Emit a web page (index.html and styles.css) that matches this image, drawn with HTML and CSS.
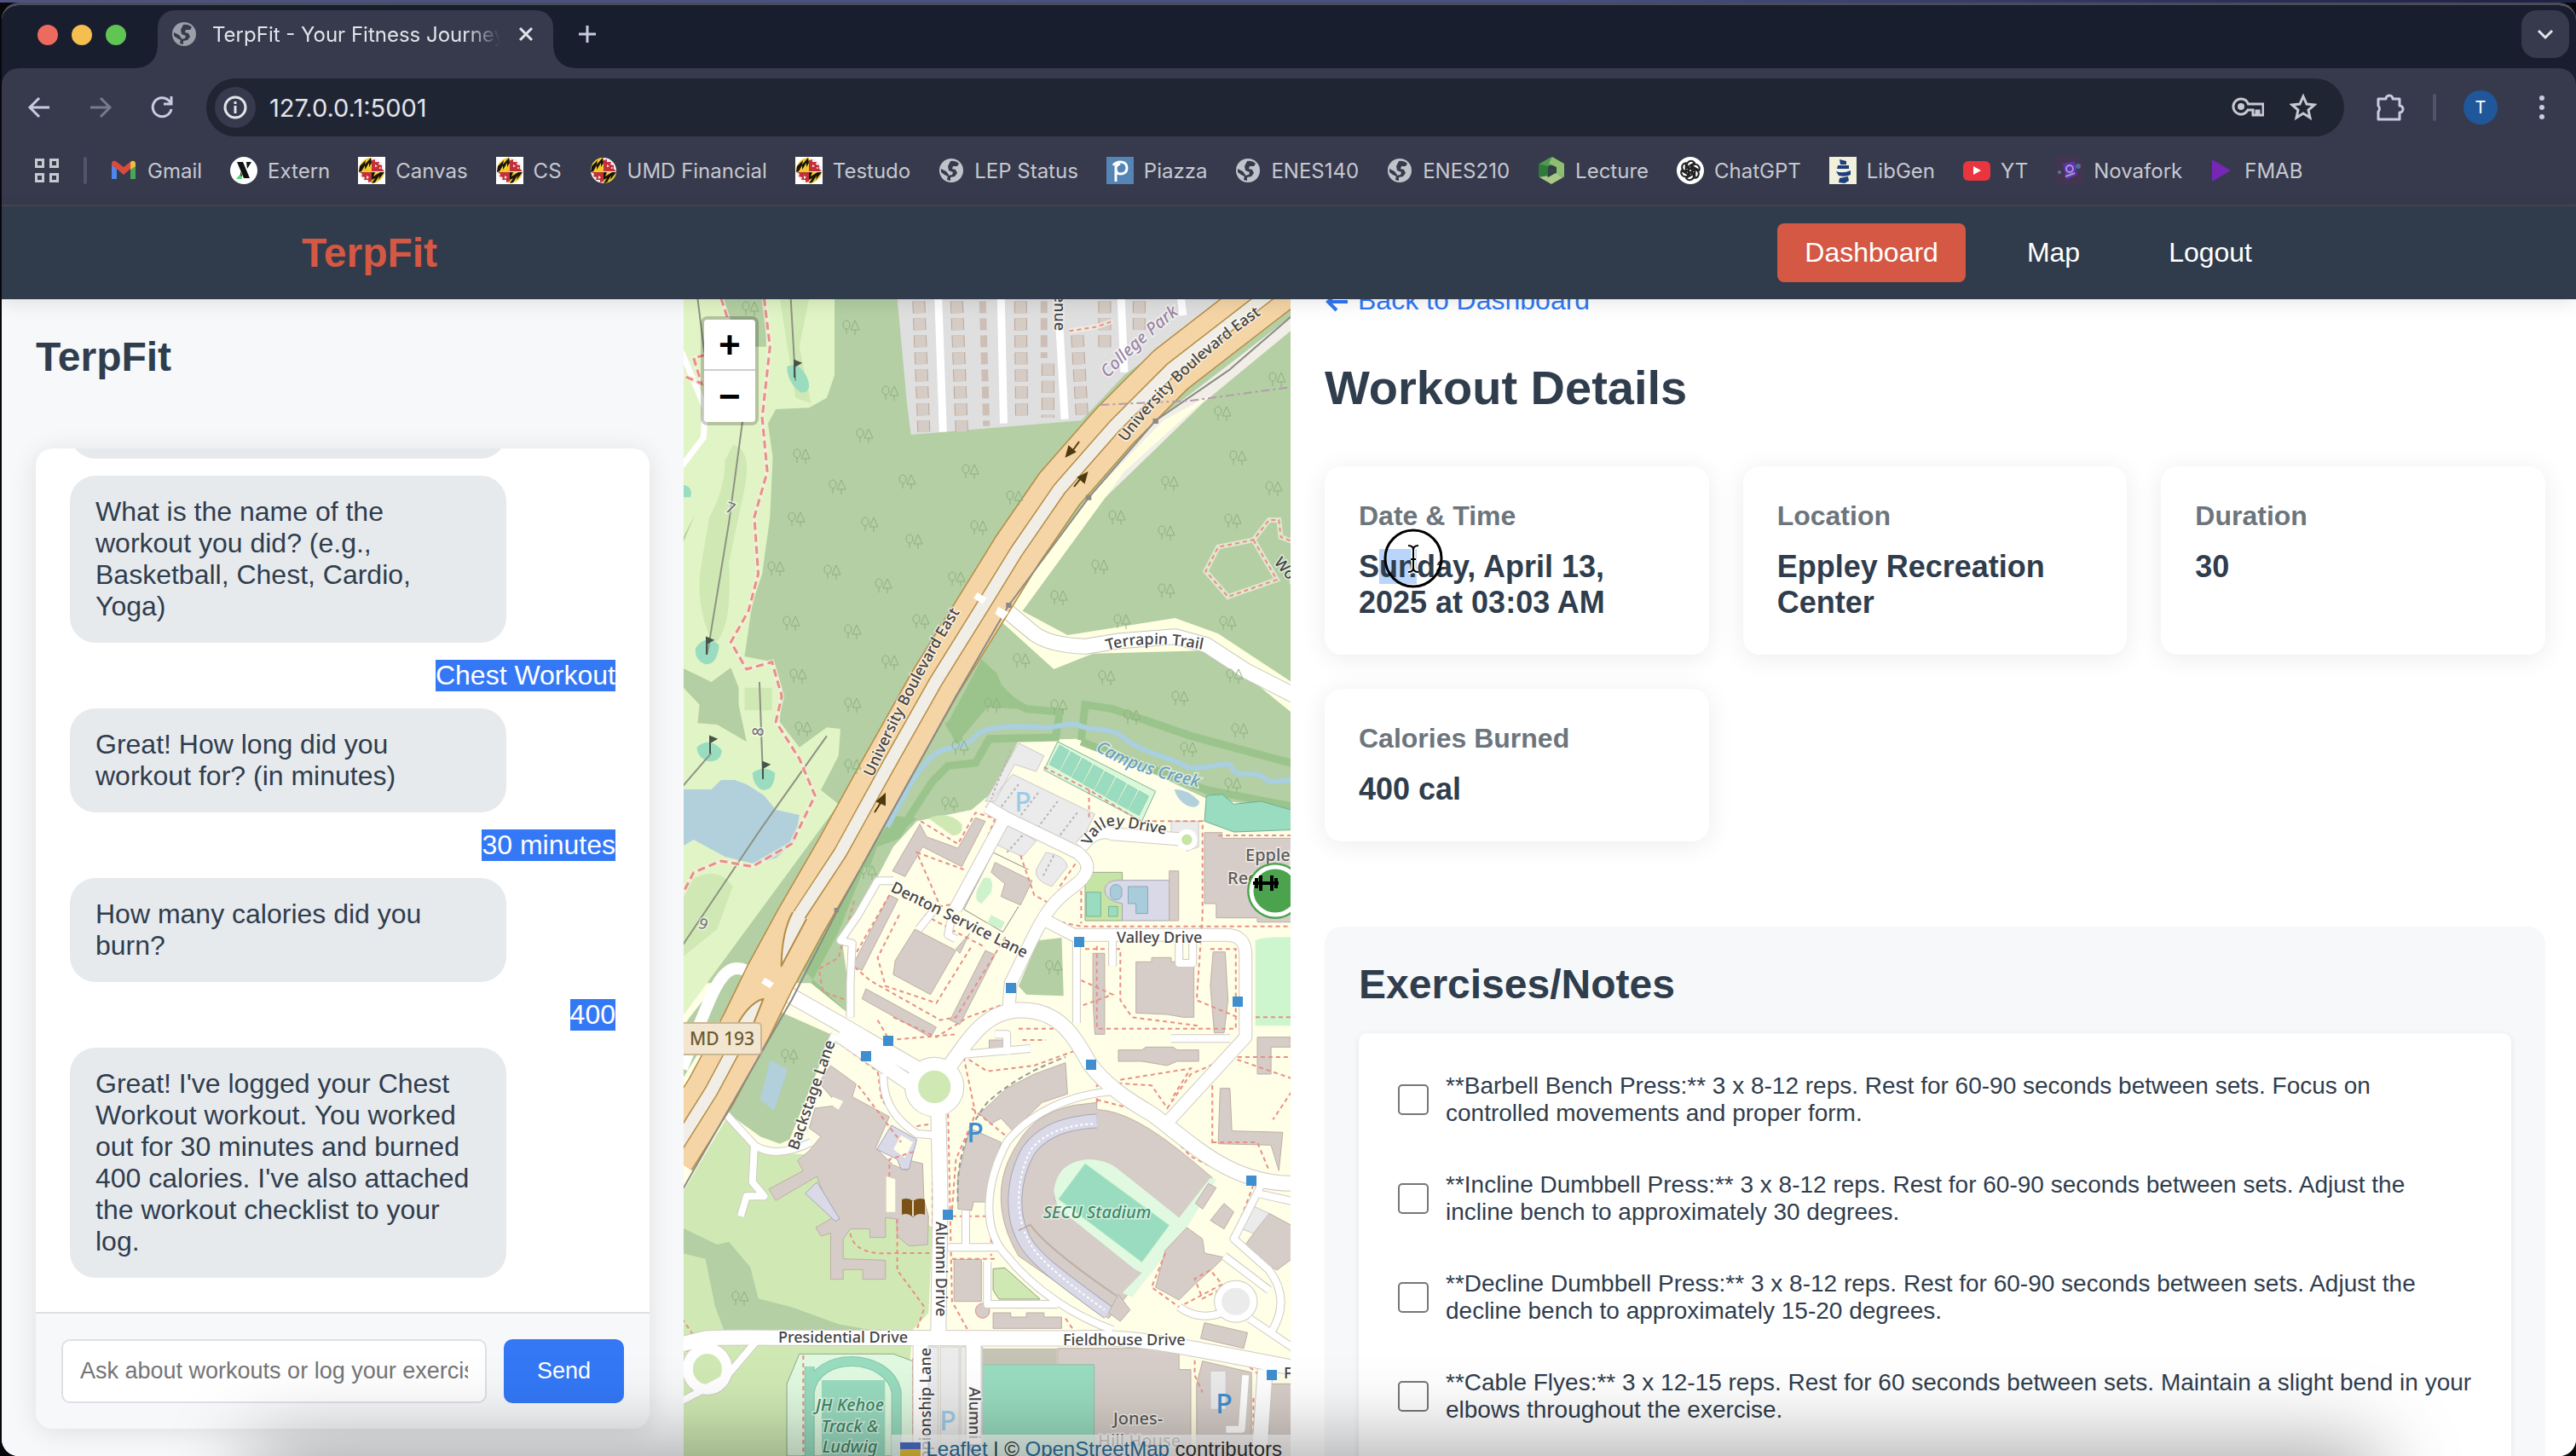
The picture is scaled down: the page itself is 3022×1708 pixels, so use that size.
FILE: index.html
```html
<!DOCTYPE html>
<html lang="en">
<head>
<meta charset="utf-8">
<title>TerpFit - Your Fitness Journey</title>
<link rel="stylesheet" href="styles.css">
</head>
<body>
<svg class="defs" aria-hidden="true">
  <defs>
    <symbol id="globe" viewBox="0 0 30 30">
      <circle cx="15" cy="15" r="14" fill="currentColor"/>
      <path class="cut" d="M14 4Q20 3 24 7L22 10 17 10 16 13 20 14 22 18 19 22 14 23 14 27 10 26 11 21 16 20 17 17 12 15 11 10Z M3 13L9 16 12 20 11 22 7 20 3 17Z"/>
    </symbol>
    <symbol id="terp" viewBox="0 0 32 32">
      <circle cx="16" cy="16" r="15" fill="#f4eeee"/>
      <path d="M16 1A15 15 0 0 0 1 18H16ZM16 31A15 15 0 0 0 31 18H16Z" fill="#efc92f"/>
      <path d="M2 11L9 4 8 9 15 1 16 7 13 12 13 7 8 15 8 10 4 17 1 18ZM16 18H20L18 23 26 18H31L24 27 25 22 20 30 16 31 20 25 16 27Z" fill="#17130a"/>
      <path d="M16 4L20 3 20 6 25 6 24 9 28 10 28 14 31 17H16ZM16 18V29L12 30 12 27 7 27 8 24 4 23 5 20 2 18Z" fill="#c2303a"/>
      <path d="M20 9l3 2-3 1zM10 22l3 2-3 2zM25 12l3 1-3 1z" fill="#f4eeee"/>
    </symbol>
  </defs>
</svg>
<div class="window">
  <header class="browser">
    <div class="tabstrip">
      <div class="lights"><span class="red"></span><span class="yellow"></span><span class="green"></span></div>
      <div class="tab">
        <svg class="globe" width="30" height="30"><use href="#globe"/></svg>
        <span class="tab-title">TerpFit - Your Fitness Journey</span>
        <button class="icon-btn" aria-label="Close tab"><svg width="24" height="24" viewBox="0 0 24 24"><path d="M5 5l14 14M19 5L5 19" stroke="#e3e4ea" stroke-width="3"/></svg></button>
      </div>
      <button class="icon-btn new-tab" aria-label="New tab"><svg width="24" height="24" viewBox="0 0 24 24"><path d="M12 2v20M2 12h20" stroke="#c9cbe0" stroke-width="3"/></svg></button>
      <button class="tab-search" aria-label="Search tabs"><svg width="24" height="24" viewBox="0 0 24 24"><path d="M4 8l8 8 8-8" fill="none" stroke="#e3e4ea" stroke-width="3"/></svg></button>
    </div>
    <div class="toolbar">
      <button class="icon-btn" aria-label="Back"><svg width="28" height="28" viewBox="0 0 28 28"><path d="M26 14H3M14 3L3 14l11 11" fill="none" stroke="#c9cbe0" stroke-width="3"/></svg></button>
      <button class="icon-btn" aria-label="Forward"><svg width="28" height="28" viewBox="0 0 28 28"><path d="M2 14h23M14 3l11 11-11 11" fill="none" stroke="#777a88" stroke-width="3"/></svg></button>
      <button class="icon-btn" aria-label="Reload"><svg width="28" height="28" viewBox="0 0 28 28"><path d="M25 16A11 11 0 1 1 22 6l3 3M25 1v9h-9" fill="none" stroke="#c9cbe0" stroke-width="3"/></svg></button>
      <div class="omnibox">
        <span class="site-info"><svg width="28" height="28" viewBox="0 0 28 28"><circle cx="14" cy="14" r="12" fill="none" stroke="#e3e4ea" stroke-width="3"/><path d="M14 12v9M14 7v3" stroke="#e3e4ea" stroke-width="3"/></svg></span>
        <input class="url" type="text" value="127.0.0.1:5001" aria-label="Address">
        <button class="icon-btn" aria-label="Passwords"><svg width="38" height="24" viewBox="0 0 38 24"><path d="M11 2a9 9 0 1 0 8 13h6v6h4v-5h3v5h5V8H19.500A9 9 0 0 0 11 2z" fill="none" stroke="#c7c8d0" stroke-width="3"/><circle cx="11" cy="11" r="4" fill="#c7c8d0"/></svg></button>
        <button class="icon-btn" aria-label="Bookmark"><svg width="32" height="32" viewBox="0 0 32 32"><path d="M16 3l4 9 9 1-7 6 2 9-8-5-8 5 2-9-7-6 9-1z" fill="none" stroke="#c7c8d0" stroke-width="3"/></svg></button>
      </div>
      <button class="icon-btn ext" aria-label="Extensions"><svg width="36" height="36" viewBox="0 0 36 36"><path d="M4 8h9a4 4 0 0 1 8 0h8v8a4 4 0 0 1 0 8v8H4v-9a5 5 0 0 0 0-7z" fill="none" stroke="#c9cbe0" stroke-width="3" stroke-linejoin="round"/></svg></button>
      <span class="rule"></span>
      <button class="avatar" aria-label="Profile">T</button>
      <button class="icon-btn" aria-label="Menu"><svg width="8" height="30" viewBox="0 0 8 30"><g fill="#c9cbe0"><circle cx="4" cy="4" r="3"/><circle cx="4" cy="15" r="3"/><circle cx="4" cy="26" r="3"/></g></svg></button>
    </div>
    <nav class="bookmarks" aria-label="Bookmarks">
      <button class="icon-btn" aria-label="Apps"><svg width="30" height="30" viewBox="0 0 30 30"><path d="M2.500 2.500h8v8h-8zM19.500 2.500h8v8h-8zM2.500 19.500h8v8h-8zM19.500 19.500h8v8h-8z" fill="none" stroke="#c7c8d0" stroke-width="3"/></svg></button>
      <span class="rule"></span>
      <a href="#"><svg width="32" height="32" viewBox="0 0 32 32"><path d="M2 8v18h6V14z" fill="#4e86ec"/><path d="M24 14v12h6V8z" fill="#4aa757"/><path d="M2 8c0-4 4-4 6-2l8 6 8-6 0 8-8 7-8-7-6-4z" fill="#d94b3d"/><path d="M24 6c2-2 6-2 6 2v3l-6 4z" fill="#f0bc3e"/></svg>Gmail</a>
      <a href="#"><svg width="32" height="32" viewBox="0 0 32 32"><circle cx="16" cy="16" r="16" fill="#fff"/><path d="M8 6h7l8 19h-7zM19 6h6l-5 8zM12 17l2 5-2 4z" fill="#111"/><path d="M7 26l5-6 2 6z" fill="#4ddc6d"/></svg>Extern</a>
      <a href="#"><svg class="tile" width="32" height="32"><use href="#terp"/></svg>Canvas</a>
      <a href="#"><svg class="tile" width="32" height="32"><use href="#terp"/></svg>CS</a>
      <a href="#"><svg width="32" height="32"><use href="#terp"/></svg>UMD Financial</a>
      <a href="#"><svg class="tile" width="32" height="32"><use href="#terp"/></svg>Testudo</a>
      <a href="#"><svg class="globe light" width="30" height="30"><use href="#globe"/></svg>LEP Status</a>
      <a href="#"><svg width="32" height="32" viewBox="0 0 32 32"><path fill="#5585b5" d="M0 0h32v32H0z"/><path d="M11 29V12M8 10q3-4 8-4 8 0 8 7t-8 7q-5 0-5-7 0-3 5-5" fill="none" stroke="#fff" stroke-width="3"/></svg>Piazza</a>
      <a href="#"><svg class="globe light" width="30" height="30"><use href="#globe"/></svg>ENES140</a>
      <a href="#"><svg class="globe light" width="30" height="30"><use href="#globe"/></svg>ENES210</a>
      <a href="#"><svg width="32" height="32" viewBox="0 0 32 32"><path d="M16 0L2 8v16l10-4V11l8-3z" fill="#4f9a4f"/><path d="M17 0l14 8v16l-9-4 0-8-9-4z" fill="#8cc06e"/><path d="M2 24l14 8 14-8-9-5-9 5-4-8z" fill="#a9c987"/><path d="M13 12l9 5-9 4z" fill="#2c4a3f"/><path d="M1 8l11 3v11L1 24z" fill="#2f7a3a"/></svg>Lecture</a>
      <a href="#"><svg width="32" height="32" viewBox="0 0 32 32"><circle cx="16" cy="16" r="16" fill="#fff"/><g fill="none" stroke="#222" stroke-width="2"><path id="petal" d="M12 14V9a5 5 0 0 1 9-2l-7 4v8"/><use href="#petal" transform="rotate(60 16 16)"/><use href="#petal" transform="rotate(120 16 16)"/><use href="#petal" transform="rotate(180 16 16)"/><use href="#petal" transform="rotate(240 16 16)"/><use href="#petal" transform="rotate(300 16 16)"/></g></svg>ChatGPT</a>
      <a href="#"><svg width="32" height="32" viewBox="0 0 32 32"><path fill="#f1f0dc" d="M0 0h32v32H0z"/><path d="M12 3l8 2v4h-7zM10 10h13v4H9zM8 17q8 3 17-1v5q-6 3-14 1zM12 25l10-2 1 5-5 3-7-1z" fill="#1d3d7c"/></svg>LibGen</a>
      <a href="#"><svg width="32" height="32" viewBox="0 0 32 32"><rect y="5" width="32" height="23" rx="6" fill="#e8353e"/><path d="M12 11l9 5-9 5z" fill="#fff"/></svg>YT</a>
      <a href="#"><svg width="32" height="32" viewBox="0 0 32 32"><path fill="#43344f" d="M0 0h32v32H0z"/><path d="M8 8l14-3 3 16-13 6z" fill="#5a35a8"/><circle cx="16" cy="14" r="4" fill="none" stroke="#a994d8" stroke-width="2"/><circle cx="4" cy="18" r="2" fill="#4a7f9c"/><circle cx="26" cy="11" r="3" fill="#4a6f9c"/><path d="M11 23l11-4" stroke="#a99cc8" stroke-width="2"/></svg>Novafork</a>
      <a href="#"><svg width="28" height="32" viewBox="0 0 28 32"><path d="M2 3l22 13L2 29z" fill="#7627b5"/></svg>FMAB</a>
    </nav>
  </header>

  <div class="site-nav">
    <div class="site-nav-inner">
      <a class="brand" href="#">TerpFit</a>
      <nav class="links" aria-label="Main"><a class="active" href="#">Dashboard</a><a href="#">Map</a><a href="#">Logout</a></nav>
    </div>
  </div>

  <main class="page">
    <section class="chat-col">
      <h2>TerpFit</h2>
      <div class="chat">
        <div class="messages">
          <p class="bot">Hi! Let's log your workout.</p>
          <p class="bot">What is the name of the workout you did? (e.g., Basketball, Chest, Cardio, Yoga)</p>
          <p class="user"><mark>Chest Workout</mark></p>
          <p class="bot">Great! How long did you workout for? (in minutes)</p>
          <p class="user"><mark>30 minutes</mark></p>
          <p class="bot">How many calories did you burn?</p>
          <p class="user"><mark>400</mark></p>
          <p class="bot">Great! I've logged your Chest Workout workout. You worked out for 30 minutes and burned 400 calories. I've also attached the workout checklist to your log.</p>
        </div>
        <form class="composer">
          <input type="text" placeholder="Ask about workouts or log your exercises..." aria-label="Message">
          <button type="button">Send</button>
        </form>
      </div>
    </section>

    <section class="map" aria-label="Campus map">
      <svg class="map-art" viewBox="802 351 712 1357" preserveAspectRatio="xMidYMid slice">
        <defs>
          <g id="t" fill="none" stroke="#8fb07e" stroke-width="1"><ellipse cx="-5" cy="-3" rx="4" ry="5"/><path d="M-5 2v6M5 -8l-5 11h10zM5 3v6"/></g>
          <rect id="bus" x="-6" y="-6" width="12" height="12" fill="#3e8ed0"/>
          <path id="court" d="M965 222L990 242 965 310 938 290Z"/>
        </defs>
        <rect x="780" y="330" width="760" height="1400" fill="#fffee6"/>
        <g class="geo" transform="translate(800 340) scale(.4592 .33333)">
          <!-- woodland -->
          <path fill="#b3cfa3" d="M0 0H1568V1830L1340 1790 1200 1700 1010 1580 860 1585 800 1760 740 1830 600 1870 540 1960 410 2300 430 2500 420 2540 330 2440 0 2440Z"/>
          <path fill="#b3cfa3" d="M910 2290L970 2280 975 2485 880 2480 860 2450Z"/>
          <path fill="#d0e9b4" d="M0 3180L120 2900 200 3020 280 3040 400 3050 640 3300 630 3600 590 3660 560 4104 0 4104Z"/>
          <path fill="#b3cfa3" d="M150 2650L250 2540 380 2620 360 2700 275 2990 250 3005 200 2980 100 2880ZM0 3300L90 3360 120 3350 175 3440 195 3550 280 3580 400 3640 520 3670 110 3670 85 3580 60 3410 0 3390Z"/>
          <path fill="#b1d0dc" d="M225 2710L270 2745 235 2890 200 2850Z"/>
          <!-- golf course -->
          <path fill="#e1f4c5" d="M0 0H390V300L370 380 325 415 240 420 220 470 232 590 225 800 205 1000 180 1100 160 1290 235 1310 255 1400 250 1520 300 1610 370 1540 405 1545 400 1640 355 1760 400 1810 0 2560Z"/>
          <path fill="#b3cfa3" d="M100 0H215V200H140ZM0 880L32 795 0 900ZM0 1330L75 1380 125 1330 145 1400 145 1460 165 1590 90 1530 40 1525 45 1460 0 1395ZM20 2560L100 2420 180 2420 80 2600 0 2780V2600Z"/>
          <path fill="#d0e9b4" d="M250 30H325L300 200 330 400 290 380ZM130 545Q180 560 160 700L120 960Q130 1200 80 1250 30 1100 50 960L70 800Q110 700 110 600ZM20 2080Q90 2020 130 2100L90 2250 0 2350V2150ZM160 1400H230V1480H160ZM630 1860Q680 1830 715 1880 720 1920 690 1920Z"/>
          <path fill="#99dcc0" d="M268 270Q300 250 320 310 335 360 305 362 270 330 268 270ZM35 1260Q60 1210 95 1250 90 1320 60 1318 30 1300 35 1260ZM0 685Q30 690 22 730H0ZM38 1610Q70 1570 102 1620 100 1660 70 1660 40 1650 38 1610ZM180 1700Q210 1670 238 1700 235 1765 205 1760 182 1745 180 1700Z"/>
          <path fill="#b1d0dc" d="M0 1758H75L100 1725H135L165 1740 210 1780 240 1830 300 1848 290 1940 240 2000 180 2018 110 1995 30 1935 0 1960Z"/>
          <path class="thin" stroke="#8d9384" d="M278 30L290 320M40 30L60 250M155 460L120 820 65 1280M198 1380L207 1720M370 1570L200 1900 0 2310M75 1630L0 1750"/>
          <!-- residential block -->
          <path fill="#dfdfdf" d="M550 30H1400L1130 300 1020 460 585 510 575 400Z"/>
          <g stroke="#fff" fill="none" stroke-width="9"><path d="M655 30L667 500M815 30L822 470M965 140L978 455M1122 30L1130 290M1275 30L1280 90"/></g>
          <g class="house" stroke="#bba79a" stroke-width="15"><path d="M605 40L618 500M702 40L715 500M935 260V450M865 40L868 460M1010 160L1022 440M1080 40V220M1168 40V140"/></g>
          <g class="house" stroke="#d6ccc6" stroke-width="13"><path d="M605 40L618 500M702 40L715 500M935 260V450M865 40L868 460M1010 160L1022 440M1080 40V220M1168 40V140"/></g>
          <path class="house" stroke="#cdbfb6" stroke-width="8" d="M768 40L778 480M925 40V240"/>
          <!-- verge along the boulevard -->
          <path fill="#f0eee6" d="M1568 80L1400 260 1210 460 1040 730 830 1110 1060 760 1330 400 1568 130Z"/>
          <path fill="#ffffe2" d="M1350 370L1250 490 1130 640 870 1130 985 1215 1260 1155 1370 1210 1568 1390V1500L1470 1390 1330 1270 1050 1280 950 1335 810 1160 1040 730 1230 460Z"/>
          <!-- stream and reserve edges -->
          <path fill="#9bc48d" d="M765 1300L805 1350 830 1440 880 1475 780 1470 700 1600 680 1520 720 1420ZM600 1860L550 1920 490 1950 400 2260 330 2440 420 2540 300 2380 460 2020 540 1850Z"/>
          <g fill="none" stroke="#9bc48d" stroke-width="9"><path d="M810 1400Q840 1450 880 1475L965 1485 955 1575 785 1580 750 1665 680 1675 640 1730 550 1920 490 1950 470 2030M680 1520L710 1590M1020 1585L1030 1460 1100 1475 1300 1570 1568 1670M1020 1590L1340 1760 1568 1820"/></g>
          <path fill="none" stroke="#a9cfe0" stroke-width="6" d="M525 1890C560 1800 600 1680 650 1630C690 1600 720 1620 750 1570C780 1530 860 1535 920 1540C960 1545 980 1520 1010 1530C1050 1560 1100 1530 1140 1590C1200 1640 1260 1650 1290 1680C1340 1690 1370 1665 1400 1670C1420 1740 1450 1670 1500 1730L1568 1725"/>
          <path fill="#b1d0dc" d="M1258 1758Q1290 1755 1322 1800 1320 1830 1290 1815 1265 1795 1258 1758Z"/>
          <!-- trail roads -->
          <g fill="none" stroke="#c5c5bd" stroke-width="19" stroke-linejoin="round"><path d="M750 1085L830 1130 900 1210Q940 1250 1030 1255L1120 1235 1260 1220 1340 1250 1440 1340 1568 1430"/></g>
          <g fill="none" stroke="#fff" stroke-width="17" stroke-linejoin="round"><path d="M750 1085L830 1130 900 1210Q940 1250 1030 1255L1120 1235 1260 1220 1340 1250 1440 1340 1568 1430"/></g>
          <g fill="none" stroke="#fff" stroke-width="7"><path d="M0 220L60 420 55 520 0 620"/></g>
          <path fill="none" stroke="#fff" stroke-width="14" d="M0 2740C70 2500 90 2410 130 2390C160 2380 180 2410 210 2440"/>
          <!-- campus blocks: parking, sport -->
          <path class="edge" fill="#ebebeb" stroke="#cfc9c9" d="M845 1705L1055 1845 1010 1970 775 1820ZM860 1595L925 1640 905 1695 850 1670 800 1800H775ZM820 1870L905 1940 870 1995 800 1950ZM930 1980Q980 1990 985 2030L945 2100Q900 2080 905 2040ZM1250 1930V1870H1320V1960L1290 1975Z"/>
          <path class="dash" stroke="#b9b4b4" d="M860 1740L810 1830M910 1770L860 1860M960 1800L905 1900M1010 1840L960 1930M840 1620L790 1790M870 1920L830 1980M950 1990L920 2070"/>
          <path class="edge" fill="#dbf9da" stroke="#7fb296" d="M960 1590L1210 1765 1175 1870 925 1690Z"/>
          <g class="edge" fill="#99dcc0" stroke="#86b99c" transform="translate(0 1380)"><use href="#court"/><use href="#court" x="29" y="23"/><use href="#court" x="58" y="46"/><use href="#court" x="87" y="69"/><use href="#court" x="116" y="92"/><use href="#court" x="145" y="115"/><use href="#court" x="174" y="138"/><use href="#court" x="203" y="160"/></g>
          <path class="edge" fill="#99dcc0" stroke="#6fae93" d="M1340 1780L1380 1775 1410 1810 1480 1800 1568 1835V1900L1410 1908 1335 1870Z"/>
          <path fill="#cdf6cf" d="M1465 2290Q1480 2275 1568 2278V2590H1465Z"/>
          <path class="edge" fill="#c6e4a4" stroke="#9aa58c" d="M1030 2050H1125V2220H1030Z"/>
          <path class="edge" fill="#dad9e8" stroke="#a7a6b8" d="M1110 2078H1245V2220H1125V2160Q1080 2150 1080 2110 1085 2080 1110 2078Z"/>
          <path class="edge" fill="#a9ccdb" stroke="#88a9bb" d="M1140 2100H1190V2195H1160V2160H1140ZM1095 2120a15 20 0 1 0 28 0a15 20 0 1 0 -28 0Z"/>
          <path class="edge" fill="#99dcc0" stroke="#7fb296" d="M1033 2120H1070V2205H1033ZM1090 2170H1113V2205H1090Z"/>
          <!-- buildings, north campus -->
          <g class="edge" fill="#d6cdc8" stroke="#bfaea4">
            <path d="M608 1880L625 1925 705 1965 750 1858 775 1870 715 2030 615 1960 570 2065 538 2045ZM530 2130L552 2145 460 2395 435 2380ZM800 2015L895 2080 865 2165 815 2135 825 2090 790 2050ZM595 2250L700 2325 635 2480 540 2410 545 2360ZM470 2460L650 2595 635 2630 460 2495ZM775 2325L800 2340 710 2585 685 2570ZM735 2265L710 2335 700 2320Z"/>
            <path d="M1335 1910H1380V1930H1568V2225H1470V2210H1365V2160H1335ZM1245 2045H1269V2220H1245ZM1050 2335H1080V2620H1055L1050 2500ZM1357 2330H1388L1395 2500 1385 2615H1360L1350 2450ZM1160 2365H1200V2350H1250V2365H1308V2560H1280L1240 2550 1160 2545ZM1115 2675H1175L1185 2665H1255L1265 2675H1320V2715H1265L1240 2730 1175 2715H1115ZM1470 2630H1555V2665H1505V2760H1470ZM785 2640H820V2670H785Z"/>
          </g>
          <path fill="none" class="edge" stroke="#8f8c86" d="M795 1980L720 2180 820 2260 860 2170M795 1980L885 2040"/>
          <path fill="#cdf2cc" d="M770 2070Q800 2060 790 2120L765 2160Q745 2150 755 2110ZM790 2200L825 2225 815 2250 780 2230Z"/>
          <!-- performing arts centre -->
          <path class="edge" fill="#d6cdc8" stroke="#bfaea4" d="M380 2730L445 2795 435 2840 530 2910 495 3020 540 3080 575 3100 585 3065 615 3075 618 3200 630 3260 628 3360 580 3365 550 3330 548 3270 520 3265 520 3335 480 3335V3305H430L412 3340V3410L520 3415V3482H462V3448H412V3482H380V3320L355 3330 342 3300 385 3265 345 3120 240 3205 222 3165 310 3100 295 3065 325 3030 355 2980 325 2950 340 2880 400 2870 350 2790Z"/>
          <path fill="#fffee6" d="M385 2840L412 2855 400 2885 372 2860ZM522 3120L545 3130V3245H522Z"/>
          <path class="edge" fill="#dad9e8" stroke="#a7a6b8" d="M345 3140L403 3270 392 3278 315 3180ZM535 2940L600 2990 580 3095H560L550 3060 498 3025Z"/>
          <path fill="#fffee6" d="M560 2975L590 3000 570 3055 540 3025Z"/>
          <!-- stadium -->
          <path class="edge" fill="#d6cdc8" stroke="#bfaea4" d="M980 2720L985 2830 920 2860 845 2960 815 2915 790 2935 760 2900 830 2810 900 2760ZM735 2950L815 3000 780 3210H745L740 3240 705 3235V3120Z"/>
          <path class="edge" fill="#d6cdc8" stroke="#bfaea4" d="M1000 2870L1060 2860V2885C1150 2890 1250 3000 1355 3125L1270 3265 1120 3110 950 3200 1180 3465 1090 3620 860 3400C800 3260 800 3120 860 3000Q900 2900 1000 2870Z"/>
          <path fill="#e1f9e0" d="M1040 3060Q960 3065 950 3170L960 3230 1155 3445 1175 3460 1125 3530 1150 3545 1290 3300 1365 3130 1350 3125 1270 3265 1110 3090Q1080 3060 1040 3060Z"/>
          <path class="edge" fill="#99dcc0" stroke="#b9efc4" d="M1030 3075L1245 3292 1175 3422 962 3200Z"/>
          <path fill="none" stroke="#a7a6b8" stroke-width="17" d="M1060 2925C980 2930 920 2960 885 3030C840 3140 845 3260 870 3330C890 3400 960 3470 1090 3600"/>
          <path fill="none" stroke="#dad9e8" stroke-width="15" d="M1060 2925C980 2930 920 2960 885 3030C840 3140 845 3260 870 3330C890 3400 960 3470 1090 3600"/>
          <path class="dash" stroke="#fff" d="M1050 2935C980 2940 920 2970 890 3030C850 3140 855 3260 880 3330C900 3400 960 3470 1080 3590"/>
          <path fill="none" class="thin" stroke="#bfaea4" d="M860 3310L890 3290Q930 3370 1110 3540"/>
          <!-- buildings, south campus -->
          <g class="edge" fill="#d6cdc8" stroke="#bfaea4">
            <path d="M695 3412H765V3560H695ZM795 3600H840V3615H880V3600H925V3615H970V3655H795ZM1290 3300L1330 3340 1335 3390 1385 3405 1355 3445 1310 3500 1270 3555 1210 3510 1235 3380ZM1335 3635L1445 3670 1435 3725 1325 3690ZM1375 2810H1400L1405 2960 1535 2965 1525 3100 1505 3010 1370 3005ZM1385 3215L1410 3245 1385 3305 1350 3275ZM1345 3145L1365 3160 1330 3235 1312 3215ZM1500 3250L1568 3300V3400L1520 3450 1430 3380 1450 3340ZM1115 3535L1145 3590 1120 3630 1090 3600Z"/>
            <path d="M960 3725H1270V3800H1300V4104H1053V3783H960ZM1330 3770L1455 3810V4104H1315V3850ZM1500 3850H1568V4104H1500ZM295 3920L275 4104H305V3920Z"/>
          </g>
          <path class="edge" fill="#ebebeb" stroke="#c9c9c9" d="M1460 3225L1500 3250 1460 3320 1420 3300ZM1350 3805H1390V3940H1350Z"/>
          <path class="edge" fill="#d0e9b4" stroke="#8aa377" d="M795 3445L825 3442 915 3552H810L795 3520Z"/>
          <path fill="#c5c4b4" d="M768 3725H958V3783H768Z"/><path class="edge" fill="#99dcc0" stroke="#8cc4a8" d="M768 3783H1053V4104H768Z"/>
          <path class="edge" fill="#e1f9e0" stroke="#92a888" d="M300 3745H540L590 3770V4104H268V3850Z"/>
          <path fill="none" stroke="#86c9ab" stroke-width="12" d="M326 3790V4104M326 3880C340 3730 530 3740 548 3880V4104"/>
          <path fill="none" stroke="#99dcc0" stroke-width="10" d="M326 3790V4104M326 3880C340 3730 530 3740 548 3880V4104"/>
          <path fill="#99dcc0" d="M357 3837H519V4104H357Z"/>
          <path class="edge" fill="#ebebeb" stroke="#c9c9c9" d="M628 3720H655V4104H628ZM660 3720H708V4104H660ZM712 3720H768V4104H712Z"/>
          <ellipse class="edge" cx="768" cy="3593" rx="18" ry="26" fill="#d6cdc8" stroke="#e88a80"/>
          <!-- footpaths -->
          <path class="foot halo" d="M100 30L140 200 30 240 50 330 0 300M210 30L225 200 205 450 218 640 185 800 195 1000 170 1130 125 1240 165 1335 230 1310 255 1430 240 1520 300 1650 340 1780 280 1950 180 2030 100 2010 30 2050 0 2130"/>
          <path class="foot strong" d="M100 30L140 200 30 240 50 330 0 300M210 30L225 200 205 450 218 640 185 800 195 1000 170 1130 125 1240 165 1335 230 1310 255 1430 240 1520 300 1650 340 1780 280 1950 180 2030 100 2010 30 2050 0 2130"/>
          <path class="foot halo" d="M990 145L1060 130 1100 110M1460 880L1520 1020 1395 1080 1338 990 1370 905 1460 880 1500 810H1525L1530 870 1568 890"/>
          <path class="foot" d="M990 145L1060 130 1100 110M1460 880L1520 1020 1395 1080 1338 990 1370 905 1460 880 1500 810H1525L1530 870 1568 890"/>
          <path class="foot" d="M610 1870L705 1950 750 1840 800 1860 760 2000 700 2160 660 2170 600 1980 720 2040M925 1680L1040 1760 1170 1870 1330 1870 1330 2200 1315 2500 1420 2560H1568M1040 1760V1860M865 1990L900 2130 940 2160M1005 2020L960 2110M1370 1920H1568M950 2220L1020 2240H1568M1020 1980V2230M530 2130L430 2370 480 2430 660 2570 700 2560 830 2270M555 2200L500 2350 520 2450 650 2510 740 2310M620 2200L700 2260 770 2310M440 2150L400 2350 350 2390 360 2470 420 2500M1030 2320H1120V2500L1150 2560 1320 2590M1350 2320H1415V2600H1060V2300"/>
          <path class="foot" d="M1020 2430L1100 2480 1020 2520M390 2640L500 2750 510 2850 570 2950 660 2930M450 2800L560 3000M500 2570L530 2640 700 2620M540 2560L650 2630 730 2560 830 2510 920 2520 970 2600M860 2600H950M870 2640H930M700 2680L780 2750 900 2730 1000 2680M720 2700L750 2900 700 3060 690 3240M680 2900L690 3560 730 3660M640 3000V3600M530 3120V3060L600 3030M430 3320Q440 3400 540 3390H640M550 3270V3450L620 3580 600 3660M600 3670H1000L1150 3680 1300 3720 1450 3790 1500 3850M620 3700H780M690 3260H790V3400M690 3410H800M740 2880L830 2980M1060 2860V2800L1090 2790 1200 2800 1240 2880 1300 2760 1400 2700 1568 2780M1120 2780L1300 2740 1250 2850M1355 2800V3010M1355 3000L1470 3000 1500 3100M1060 2850L1200 2900 1300 3050 1420 3130M1235 3390L1200 3510 1270 3580 1380 3500 1350 3450 1310 3480 1330 3550 1400 3500M1460 3150L1430 3260M1310 3740V3820L1330 3880M1400 2700H1568M1568 2800L1510 2920M310 3750V4104M590 3760V4104M1460 3900V4104M0 3620L40 3700 0 3750M980 3620L1000 3660"/>
          <!-- streets: casing then fill -->
          <g fill="none" stroke="#cfcbc4" stroke-linejoin="round">
            <path stroke-width="16" d="M780 1820L830 1860 1010 1980C1050 2020 1040 2060 1000 2100C950 2150 930 2190 900 2270L840 2440 835 2530M930 2220L1000 2270H1390Q1440 2270 1440 2340V2630L1240 2930M820 1870L698 2180M1020 1960Q1060 1890 1100 1915L1290 1935"/>
            <path stroke-width="19" d="M260 2470L400 2580 600 2740M400 2620L580 2790M680 2740C740 2620 780 2540 860 2535C960 2530 1000 2620 1040 2720C1080 2800 1150 2860 1200 2900C1300 3000 1400 3150 1568 3145M655 2880L660 3200 655 3680M0 3710L60 3690Q120 3685 250 3688L1000 3690C1150 3680 1250 3710 1568 3795M745 3690V4104M610 3710V4104M1490 3800L1475 4104"/>
            <ellipse stroke-width="17" cx="645" cy="2805" rx="58" ry="80"/>
            <ellipse stroke-width="14" cx="65" cy="3798" rx="50" ry="72"/>
            <path stroke-width="10" d="M1110 2820C980 2830 880 2910 830 3000C780 3130 760 3300 830 3400C900 3520 1000 3610 1100 3660M190 3700L110 3830 0 3910M105 2890L185 3010Q240 3060 330 3000M185 3010L180 3140 210 3190 165 3190 150 3260M515 2760Q510 2890 600 2970L655 2975M725 3240V3370M680 3370H810M780 3420V3570H960M1480 3150L1410 3340 1500 3450Q1560 3560 1500 3680M1470 3180L1568 3210M1385 3400L1500 3520M1270 3580Q1320 3630 1380 3600M1450 3620L1568 3730M540 2080H500L450 2200 405 2290 435 2300 430 2440V2560M1008 2290V2580M1100 2290V2380M1270 2280V2370H1305V2280M1250 2635H1400M720 2690L890 2670M800 2620H830V2690M640 2190L605 2250M690 2200L680 2270 700 2285M1440 3820L1430 4010H1390M390 2620L370 2680"/>
            <ellipse stroke-width="10" cx="1415" cy="3560" rx="45" ry="60"/>
          </g>
          <g fill="none" stroke="#fff" stroke-linejoin="round">
            <path stroke-width="14" d="M780 1820L830 1860 1010 1980C1050 2020 1040 2060 1000 2100C950 2150 930 2190 900 2270L840 2440 835 2530M930 2220L1000 2270H1390Q1440 2270 1440 2340V2630L1240 2930M820 1870L698 2180M1020 1960Q1060 1890 1100 1915L1290 1935"/>
            <path stroke-width="17" d="M260 2470L400 2580 600 2740M400 2620L580 2790M680 2740C740 2620 780 2540 860 2535C960 2530 1000 2620 1040 2720C1080 2800 1150 2860 1200 2900C1300 3000 1400 3150 1568 3145M655 2880L660 3200 655 3680M0 3710L60 3690Q120 3685 250 3688L1000 3690C1150 3680 1250 3710 1568 3795M745 3690V4104M610 3710V4104M1490 3800L1475 4104"/>
            <ellipse stroke-width="15" cx="645" cy="2805" rx="58" ry="80" fill="#d0e9b4"/>
            <ellipse stroke-width="12" cx="65" cy="3798" rx="50" ry="72" fill="#d0e9b4"/>
            <path stroke-width="8" d="M1110 2820C980 2830 880 2910 830 3000C780 3130 760 3300 830 3400C900 3520 1000 3610 1100 3660M190 3700L110 3830 0 3910M105 2890L185 3010Q240 3060 330 3000M185 3010L180 3140 210 3190 165 3190 150 3260M515 2760Q510 2890 600 2970L655 2975M725 3240V3370M680 3370H810M780 3420V3570H960M1480 3150L1410 3340 1500 3450Q1560 3560 1500 3680M1470 3180L1568 3210M1385 3400L1500 3520M1270 3580Q1320 3630 1380 3600M1450 3620L1568 3730M540 2080H500L450 2200 405 2290 435 2300 430 2440V2560M1008 2290V2580M1100 2290V2380M1270 2280V2370H1305V2280M1250 2635H1400M720 2690L890 2670M800 2620H830V2690M640 2190L605 2250M690 2200L680 2270 700 2285M1440 3820L1430 4010H1390M390 2620L370 2680"/>
            <ellipse stroke-width="8" cx="1415" cy="3560" rx="45" ry="60" fill="#ebebeb"/>
            <ellipse stroke-width="6" cx="1290" cy="1935" rx="20" ry="28" fill="#c6e4a4"/>
          </g>
          <path fill="none" class="thin" stroke="#999" stroke-dasharray="6 4" d="M705 3210C700 3050 730 2950 780 2860Q860 2760 980 2700"/>
          <!-- boulevard -->
          <g fill="none" stroke-linejoin="round">
            <path stroke="#b48d45" stroke-width="61" d="M1570 -60L1475 40 1250 280 1105 480 965 700 855 920 770 1110 648 1380 525 1680 405 1980 300 2230 225 2420 165 2590 75 2820 -30 3050"/>
            <path stroke="#f5d5a6" stroke-width="58" d="M1570 -60L1475 40 1250 280 1105 480 965 700 855 920 770 1110 648 1380 525 1680 405 1980 300 2230 225 2420 165 2590 75 2820 -30 3050"/>
            <path stroke="#b48d45" stroke-width="17" d="M1570 -60L1475 40 1250 280 1105 480 965 700 855 920 770 1110 648 1380 525 1680 405 1980 300 2200"/>
            <path stroke="#f0eee6" stroke-width="14" d="M1570 -60L1475 40 1250 280 1105 480 965 700 855 920 770 1110 648 1380 525 1680 405 1980 298 2203"/>
            <path stroke="#b48d45" stroke-width="17" d="M145 2640L75 2820 -30 3050"/>
            <path stroke="#f0eee6" stroke-width="14" d="M146 2637L75 2820 -30 3050"/>
            <path class="thin" stroke="#b48d45" fill="#f0eee6" d="M283 2190Q255 2260 254 2380L318 2214M127 2625Q165 2510 208 2495L163 2652"/>
            <path class="thin" stroke="#8d8a86" d="M1568 80L1400 280 1210 460 1040 730 835 1110 700 1430 395 2190 280 2500 0 3170"/>
            <path class="thin" stroke="#b39bb0" stroke-dasharray="10 4 3 4" d="M1070 405L1300 390 1568 340"/>
          </g>
          <path fill="#fff" d="M755 1065L778 1085 768 1105 745 1085ZM808 1115L835 1135 820 1160 800 1140ZM212 2420L235 2440 225 2458 203 2440Z"/>
          <path fill="#8d8a86" d="M1203 453h14v18h-14zM1032 722h14v18h-14zM828 1101h14v18h-14zM389 2175h12v16h-12z"/>
        </g>
        <g stroke="#4f3a0e" stroke-width="2" fill="#4f3a0e"><path d="M1266 518l-10 14M1251 535l3-11 7 6zM1260 571l12-15M1275 555l-3 11-7-6zM1026 953l10-16M1038 932l0 12-9-4z"/></g>
        <!-- golf flags -->
        <g stroke="#46544a" stroke-width="2" fill="#46544a"><path d="M932 443v-20l7 3-7 4M829 768v-20l7 3-7 4M833 884v-20l7 3-7 4M895 914v-20l7 3-7 4"/></g>
        <!-- trees -->
        <g><use href="#t" x="998" y="384"/><use href="#t" x="880" y="362"/><use href="#t" x="1044" y="461"/><use href="#t" x="1014" y="511"/><use href="#t" x="940" y="535"/><use href="#t" x="982" y="571"/><use href="#t" x="1064" y="565"/><use href="#t" x="1138" y="553"/><use href="#t" x="1190" y="584"/><use href="#t" x="934" y="609"/><use href="#t" x="1020" y="615"/><use href="#t" x="1148" y="619"/><use href="#t" x="1072" y="635"/><use href="#t" x="910" y="667"/><use href="#t" x="976" y="671"/><use href="#t" x="1036" y="687"/><use href="#t" x="1122" y="679"/><use href="#t" x="928" y="731"/><use href="#t" x="1000" y="741"/><use href="#t" x="1080" y="729"/><use href="#t" x="1044" y="777"/><use href="#t" x="936" y="793"/><use href="#t" x="1372" y="567"/><use href="#t" x="1452" y="537"/><use href="#t" x="1434" y="485"/><use href="#t" x="1498" y="445"/><use href="#t" x="1494" y="573"/><use href="#t" x="1310" y="607"/><use href="#t" x="1368" y="625"/><use href="#t" x="1446" y="611"/><use href="#t" x="1290" y="665"/><use href="#t" x="1368" y="693"/><use href="#t" x="1242" y="701"/><use href="#t" x="1316" y="729"/><use href="#t" x="1440" y="731"/><use href="#t" x="1198" y="775"/><use href="#t" x="1298" y="795"/><use href="#t" x="1448" y="793"/><use href="#t" x="1384" y="819"/><use href="#t" x="1164" y="827"/><use href="#t" x="1242" y="829"/><use href="#t" x="1328" y="841"/><use href="#t" x="1454" y="857"/><use href="#t" x="1394" y="879"/><use href="#t" x="1446" y="921"/><use href="#t" x="1000" y="827"/><use href="#t" x="1000" y="899"/><use href="#t" x="942" y="855"/><use href="#t" x="1126" y="877"/><use href="#t" x="1114" y="943"/><use href="#t" x="1018" y="1023"/><use href="#t" x="926" y="1239"/><use href="#t" x="868" y="1523"/><use href="#t" x="1236" y="1135"/></g>
        <g><use href="#bus" x="1266" y="1105"/><use href="#bus" x="1186" y="1159"/><use href="#bus" x="1452" y="1175"/><use href="#bus" x="1042" y="1221"/><use href="#bus" x="1016" y="1239"/><use href="#bus" x="1280" y="1249"/><use href="#bus" x="1112" y="1425"/><use href="#bus" x="1468" y="1385"/><use href="#bus" x="1492" y="1613"/></g>
        <path d="M1058 1407q8-3 13 2 6-5 14-2v18q-8-3-14 3-6-6-13-3z" fill="#7a5117"/><path d="M1071 1409v18" stroke="#e9d9bd" stroke-width="2"/>
        <g class="label">
          <defs>
            <path id="road1" d="M1321 519Q1385 430 1510 348"/><path id="road2" d="M1024 912Q1078 790 1150 680"/>
            <path id="park" d="M1300 444Q1330 410 1400 354"/><path id="terrapin" d="M1299 763Q1350 748 1420 764"/>
            <path id="creek" d="M1285 880Q1330 910 1430 928"/><path id="valley" d="M1279 993Q1290 966 1312 969L1380 981"/>
            <path id="denton" d="M1044 1045L1210 1128"/>
          </defs>
          <text><textPath href="#road1">University Boulevard East</textPath></text>
          <text><textPath href="#road2">University Boulevard East</textPath></text>
          <text class="plum"><textPath href="#park">College Park</textPath></text>
          <text><textPath href="#terrapin">Terrapin Trail</textPath></text>
          <text class="water"><textPath href="#creek">Campus Creek</textPath></text>
          <text><textPath href="#valley">Valley Drive</textPath></text>
          <text><textPath href="#denton">Denton Service Lane</textPath></text>
          <text x="1310" y="1106">Valley Drive</text>
          <text x="1461" y="1010" class="place">Eppley</text><text x="1440" y="1037" class="place">Rec</text>
          <text transform="translate(936 1350) rotate(-71)">Backstage Lane</text>
          <text transform="translate(1098 1433) rotate(90)">Alumni Drive</text>
          <text transform="translate(1137 1627) rotate(90)">Alumni Drive</text>
          <text transform="translate(1092 1581) rotate(-90)" text-anchor="end">Championship Lane</text>
          <text transform="translate(1237 388) rotate(90)" text-anchor="end">Avenue</text>
          <text transform="translate(1494 660) rotate(50)">Woods</text>
          <text x="913" y="1575">Presidential Drive</text><text x="1247" y="1578">Fieldhouse Drive</text>
          <text x="1506" y="1617">Fieldhouse</text>
          <text class="sport" x="1287" y="1429">SECU Stadium</text>
          <text class="sport" x="997" y="1655">JH Kehoe</text><text class="sport" x="997" y="1680">Track &amp;</text><text class="sport" x="997" y="1704">Ludwig</text>
          <text class="place" x="1306" y="1671">Jones-</text><text class="place" x="1288" y="1697">Hill House</text>
          <text class="hole" transform="translate(850 600) rotate(20)">7</text><text class="hole" transform="translate(895 864) rotate(-85)">8</text><text class="hole" transform="translate(818 1088) rotate(20)">9</text>
        </g>
        <g class="parking"><text class="pale" x="1200" y="952">P</text><text x="1144" y="1340">P</text><text class="pale" x="1112" y="1678">P</text><text x="1436" y="1658">P</text></g>
        <rect x="798" y="1200" width="95" height="37" rx="4" fill="#f2e6d0" stroke="#cbb694" stroke-width="2"/>
        <text class="shield" x="809" y="1226">MD 193</text>
        <g><circle cx="1496" cy="1045" r="33" fill="#4ba44d"/><circle cx="1496" cy="1045" r="28" fill="#4ba44d" stroke="#fff" stroke-width="5"/><path d="M1470 1036h30M1474 1030v12M1479 1027v18M1492 1027v18M1497 1030v12" stroke="#000" stroke-width="4"/></g>
      </svg>
      <div class="zoom"><button aria-label="Zoom in">+</button><button aria-label="Zoom out">−</button></div>
      <div class="attribution"><svg width="24" height="16" viewBox="0 0 24 16"><path fill="#4c6cc8" d="M0 0h24v8H0z"/><path fill="#e3bf3c" d="M0 8h24v8H0z"/></svg><span><a href="#">Leaflet</a> | © <a href="#">OpenStreetMap</a> contributors</span></div>
    </section>

    <section class="details">
      <a class="back" href="#"><svg width="29" height="28" viewBox="0 0 29 28"><path d="M27 15H4M14 5L4 15l10 10" fill="none" stroke="#2f77f5" stroke-width="4"/></svg>Back to Dashboard</a>
      <h1>Workout Details</h1>
      <div class="cards">
        <div class="card"><h3>Date &amp; Time</h3><p>S<span class="picked">un<span class="pointer"><svg width="70" height="70" viewBox="0 0 70 70"><circle cx="35" cy="35" r="33" fill="none" stroke="#000" stroke-width="3"/><path d="M29 20q6 0 6 5v21q0 5-6 5M41 20q-6 0-6 5v21q0 5 6 5M32 36h6" fill="none" stroke="#fff" stroke-width="5"/><path d="M29 20q6 0 6 5v21q0 5-6 5M41 20q-6 0-6 5v21q0 5 6 5M32 36h6" fill="none" stroke="#000" stroke-width="2"/></svg></span></span>day, April 13, 2025 at 03:03 AM</p></div>
        <div class="card"><h3>Location</h3><p>Eppley Recreation Center</p></div>
        <div class="card"><h3>Duration</h3><p>30</p></div>
        <div class="card"><h3>Calories Burned</h3><p>400 cal</p></div>
      </div>
      <div class="notes">
        <h2>Exercises/Notes</h2>
        <div class="checklist">
          <label><input type="checkbox"><span>**Barbell Bench Press:** 3 x 8-12 reps. Rest for 60-90 seconds between sets. Focus on controlled movements and proper form.</span></label>
          <label><input type="checkbox"><span>**Incline Dumbbell Press:** 3 x 8-12 reps. Rest for 60-90 seconds between sets. Adjust the incline bench to approximately 30 degrees.</span></label>
          <label><input type="checkbox"><span>**Decline Dumbbell Press:** 3 x 8-12 reps. Rest for 60-90 seconds between sets. Adjust the decline bench to approximately 15-20 degrees.</span></label>
          <label><input type="checkbox"><span>**Cable Flyes:** 3 x 12-15 reps. Rest for 60 seconds between sets. Maintain a slight bend in your elbows throughout the exercise.</span></label>
        </div>
      </div>
    </section>
  </main>
</div>
<div class="dock-shadow"></div>
</body>
</html>
```
FILE: styles.css
```css
* { box-sizing: border-box; }
html, body { height: 100%; margin: 0; overflow: hidden; }
body {
  padding: 3px 0 0 2px;
  background: linear-gradient(90deg, #4d5280, #474f86 60%, #1d2142) top / 100% 3px no-repeat, #08080c;
  font-family: "Liberation Sans", Arial, sans-serif;
  color: #2f3d4d;
}
h1, h2, h3, p { margin: 0; }
a { text-decoration: none; color: inherit; }
button { border: 0; padding: 0; background: none; font: inherit; color: inherit; }
svg { display: block; flex: none; }
.defs { position: absolute; width: 0; height: 0; }

.window {
  height: 100%;
  display: flex;
  flex-direction: column;
  overflow: hidden;
  border-top: 3px solid #4a4c57;
  border-radius: 20px;
  background: #fff;
}

/* browser chrome */
.browser { background: #191e2f; color: #c7c8d0; font-family: Inter, Roboto, sans-serif; font-size: 24px; }
.icon-btn { display: flex; align-items: center; justify-content: center; flex: none; }
.tabstrip { height: 74px; display: flex; align-items: flex-start; padding: 6px 8px 0 42px; }
.lights { display: flex; gap: 16px; margin-top: 17px; margin-right: 37px; }
.lights span { width: 24px; height: 24px; border-radius: 50%; }
.red { background: #ec6a5e; }
.yellow { background: #f4bf4f; }
.green { background: #61c554; }
.tab {
  position: relative;
  width: 464px;
  height: 68px;
  display: flex;
  align-items: center;
  gap: 18px;
  padding: 0 20px 12px 16px;
  border-radius: 20px 20px 0 0;
  background: #363a4c;
  color: #e3e4ea;
}
.tab::before, .tab::after { content: ""; position: absolute; bottom: 0; width: 24px; height: 24px; }
.tab::before { left: -24px; background: radial-gradient(circle at 0 0, transparent 23px, #363a4c 24px); }
.tab::after { right: -24px; background: radial-gradient(circle at 100% 0, transparent 23px, #363a4c 24px); }
.tab-title {
  flex: 1;
  overflow: hidden;
  white-space: nowrap;
  -webkit-mask-image: linear-gradient(90deg, #000 88%, transparent);
  mask-image: linear-gradient(90deg, #000 88%, transparent);
}
.globe { color: #9b9fa8; }
.globe.light { color: #c1c3ca; }
.cut { fill: #363a4c; }
.new-tab { width: 56px; height: 56px; margin-left: 12px; }
.tab-search { width: 56px; height: 56px; margin-left: auto; display: flex; align-items: center; justify-content: center; border-radius: 18px; background: #363a4c; }
.toolbar {
  height: 92px;
  display: flex;
  align-items: center;
  gap: 44px;
  padding: 0 36px 0 30px;
  border-radius: 20px 20px 0 0;
  background: #363a4c;
}
.omnibox {
  flex: 1;
  height: 68px;
  display: flex;
  align-items: center;
  gap: 30px;
  margin-left: -6px;
  padding: 0 32px 0 10px;
  border-radius: 34px;
  background: #202534;
}
.site-info { width: 48px; height: 48px; display: flex; align-items: center; justify-content: center; border-radius: 50%; background: #363a4c; }
.url { flex: 1; margin-left: -14px; padding: 0; border: 0; background: none; color: #e3e4ea; font: 29px Inter, sans-serif; }
.rule { flex: none; width: 4px; height: 32px; border-radius: 2px; background: #50556b; }
.ext { margin-left: -8px; margin-right: -12px; }
.toolbar .rule { margin-right: -12px; }
.avatar { width: 40px; height: 40px; margin-right: 4px; border-radius: 50%; background: #20579a; color: #fff; font-size: 20px; }
.bookmarks {
  height: 70px;
  display: flex;
  align-items: center;
  gap: 33px;
  padding: 0 38px 12px;
  border-bottom: 2px solid #49454e;
  background: #363a4c;
  white-space: nowrap;
}
.bookmarks .rule { margin: 0 -6px 0 -5px; }
.bookmarks a { display: flex; align-items: center; gap: 12px; }
.tile { background: #fff; }

/* site navigation */
.site-nav { position: relative; z-index: 2; flex: none; height: 109px; padding: 0 38px 0 42px; background: #303c4b; box-shadow: 0 4px 20px rgba(0, 0, 0, .1); }
.site-nav-inner { max-width: 2320px; height: 100%; margin: 0 auto; display: flex; align-items: center; justify-content: space-between; }
.brand { color: #d55844; font-size: 48px; font-weight: 700; }
.links { display: flex; gap: 40px; color: #fff; font-size: 32px; }
.links a { padding: 16px 32px; line-height: 37px; border-radius: 8px; }
.links .active { background: #d55844; }

.page { flex: 1; min-height: 0; display: grid; grid-template-columns: 400fr 356fr 754fr; }

/* chat */
.chat-col { display: flex; flex-direction: column; gap: 80px; min-height: 0; padding: 40px 40px 32px; background: #f7f8fa; }
.chat-col h2 { font-size: 48px; line-height: 55px; }
.chat { flex: 1; min-height: 0; display: flex; flex-direction: column; overflow: hidden; border-radius: 20px; background: #fff; box-shadow: 0 4px 30px rgba(0, 0, 0, .1); }
.messages { flex: 1; min-height: 0; display: flex; flex-direction: column; justify-content: flex-end; gap: 20px; padding: 40px; overflow: hidden; font-size: 32px; line-height: 37px; }
.bot { flex: none; width: 80%; padding: 24px 30px; border-radius: 30px; background: #e7eaed; }
.user { flex: none; text-align: right; }
mark { display: inline-block; background: #3478f6; color: #fff; }
.composer { display: flex; gap: 20px; padding: 30px; border-top: 2px solid #dee0e6; background: #f7f8fa; }
.composer input { flex: 1; min-width: 0; height: 75px; padding: 0 20px; border: 2px solid #dee0e6; border-radius: 10px; background: #fff; font: 27px "Liberation Sans", Arial, sans-serif; }
.composer input::placeholder { color: #757575; }
.composer button { padding: 0 39px; border-radius: 10px; background: #3478f6; color: #fff; font-size: 27px; }

/* map */
.map { position: relative; min-width: 0; min-height: 0; overflow: hidden; }
.map-art { position: absolute; inset: 0; width: 100%; height: 100%; }
.geo * { vector-effect: non-scaling-stroke; }
.thin { stroke-width: 2px; }
path.thin:not([fill]) { fill: none; }
.edge { stroke-width: 1px; }
.dash { fill: none; stroke-width: 2px; stroke-dasharray: 3 3; }
.house { fill: none; stroke-dasharray: 14 6; }
.foot { fill: none; stroke: #e98f85; stroke-width: 2px; stroke-dasharray: 5 4; }
.foot.strong { stroke-width: 3px; stroke-dasharray: 9 5; }
.foot.halo { stroke: #f3efe0; stroke-opacity: .7; stroke-width: 6px; stroke-dasharray: none; }
.label { font: 500 18px "Noto Sans", sans-serif; fill: #444; stroke: #fff; stroke-opacity: .6; stroke-width: 3px; paint-order: stroke; }
.label .plum { fill: #9c86a4; font-size: 20px; font-style: italic; }
.label .water { fill: #6a9fc0; font-size: 20px; font-style: italic; }
.label .place { font-size: 20px; fill: #5f5b58; }
.label .sport { font-size: 20px; font-style: italic; fill: #3d8b62; text-anchor: middle; }
.label .hole { fill: #777; }
.parking { font: 500 32px "Noto Sans", sans-serif; fill: #3e8ed0; text-anchor: middle; }
.parking .pale { fill: #9ecbe6; }
.shield { font: 500 21px "Noto Sans", sans-serif; fill: #6b5a33; }
.zoom { position: absolute; top: 20px; left: 20px; border: 4px solid rgba(0, 0, 0, .2); border-radius: 8px; }
.zoom button { display: block; width: 60px; height: 60px; padding-top: 6px; background: #fff; color: #000; font: 700 44px/54px "Liberation Mono", monospace; }
.zoom button:first-child { border-bottom: 2px solid #ccc; border-radius: 4px 4px 0 0; }
.zoom button:last-child { border-radius: 0 0 4px 4px; }
.attribution { position: absolute; right: 0; bottom: -9px; display: flex; align-items: center; gap: 7px; padding: 0 10px; background: rgba(255, 255, 255, .7); color: #333; font-size: 24px; line-height: 34px; white-space: nowrap; }
.attribution a { color: #2a6f9c; }

/* workout details */
.details { min-width: 0; overflow: hidden; padding: 0 36px 0 40px; background: #fff; }
.back { display: flex; align-items: center; gap: 10px; margin-top: -17px; margin-bottom: 52px; color: #2f77f5; font-size: 32px; line-height: 37px; }
h1 { font-size: 56px; line-height: 64px; margin-bottom: 60px; }
.cards { display: grid; grid-template-columns: repeat(3, 1fr); gap: 40px; margin-bottom: 100px; }
.card { padding: 40px; border-radius: 20px; background: #fff; box-shadow: 0 4px 30px rgba(0, 0, 0, .08); }
.card h3 { margin-bottom: 20px; color: #6c757d; font-size: 32px; line-height: 37px; }
.card p { font-size: 36px; line-height: 42px; font-weight: 700; }
.picked { position: relative; background: #b9d5fb; }
.pointer { position: absolute; right: -31px; top: -24px; }
.notes { padding: 40px; border-radius: 20px; background: #f7f8fa; }
.notes h2 { margin-bottom: 30px; font-size: 48px; line-height: 55px; }
.checklist { padding: 20px 46px; border-radius: 10px; background: #fff; box-shadow: 0 2px 8px rgba(0, 0, 0, .08); font-size: 28px; line-height: 32px; }
.checklist label { display: flex; align-items: center; gap: 20px; padding: 26px 0; }
.checklist input { flex: none; appearance: none; width: 36px; height: 36px; margin: 0; border: 2px solid #767676; border-radius: 5px; background: #fff; }

.dock-shadow { position: fixed; z-index: 5; left: 10%; right: 8%; top: 100%; height: 80px; box-shadow: 0 0 100px 6px rgba(0, 0, 0, .4); }
```
